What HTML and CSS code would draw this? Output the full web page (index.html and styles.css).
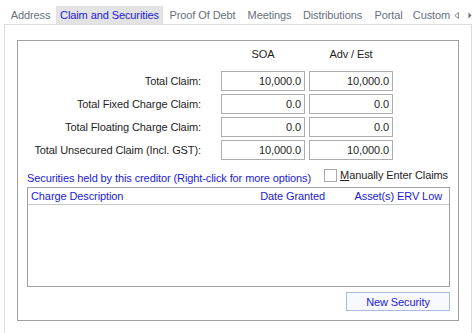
FILE: index.html
```html
<html>
<head>
    <title>Claim and Securities</title>
    <link rel="stylesheet" href="styles.css">
</head>
<body>

<div class="tabs">
    <div class="tab t1">Address</div>
    <div class="tab t2 active">Claim and Securities</div>
    <div class="tab t3">Proof Of Debt</div>
    <div class="tab t4">Meetings</div>
    <div class="tab t5">Distributions</div>
    <div class="tab t6">Portal</div>
    <div class="tab t7">Custom</div>
    <div class="arrows">
        <svg width="5" height="7" viewBox="0 0 5 7"><path d="M4.5 0.5 L0.8 3.5 L4.5 6.5 Z" fill="none" stroke="#8a8a8a" stroke-width="1"/></svg>
        <svg width="4" height="7" viewBox="0 0 4 7"><path d="M0.5 0.5 L3.5 3.5 L0.5 6.5 Z" fill="#6a6a6a"/></svg>
    </div>
</div>

<div class="page">
    <div class="groupBox">
        <div class="claimGrid">
            <div></div>
            <div class="colHead">SOA</div>
            <div class="colHead">Adv / Est</div>

            <div class="label">Total Claim:</div>
            <div class="numBox">10,000.0</div>
            <div class="numBox">10,000.0</div>

            <div class="label">Total Fixed Charge Claim:</div>
            <div class="numBox">0.0</div>
            <div class="numBox">0.0</div>

            <div class="label">Total Floating Charge Claim:</div>
            <div class="numBox">0.0</div>
            <div class="numBox">0.0</div>

            <div class="label">Total Unsecured Claim (Incl. GST):</div>
            <div class="numBox">10,000.0</div>
            <div class="numBox">10,000.0</div>
        </div>

        <div class="secSection">
            <div class="secTop">
                <span class="blueText">Securities held by this creditor (Right-click for more options)</span>
                <label class="check"><span class="checkBox"></span><span><u>M</u>anually Enter Claims</span></label>
            </div>
            <div class="listBox">
                <div class="listHead">
                    <span class="colDesc">Charge Description</span>
                    <span class="colDate">Date Granted</span>
                    <span class="colErv">Asset(s) ERV Low</span>
                </div>
            </div>
            <div class="btnRow">
                <button class="newBtn">New Security</button>
            </div>
        </div>
    </div>
</div>

</body>
</html>
```

FILE: styles.css
```css
body{
    margin: 0;
    background-color: #ffffff;
    font-family: "Liberation Sans", Arial, sans-serif;
    font-size: 11px;
    letter-spacing: -0.1px;
    color: #1e1e1e;
    overflow: hidden;
}

.tabs{
    display: flex;
    height: 24px;
    padding-left: 5px;
}

.tab{
    margin-top: 6px;
    height: 18px;
    line-height: 18px;
    text-align: center;
    color: #67707c;
    white-space: nowrap;
}

.tab.active{
    background-color: #e3e3e3;
    color: #1a1ad6;
}

.t1{ width: 51px; }
.t2{ width: 107px; }
.t3{ width: 79px; }
.t4{ width: 55px; }
.t5{ width: 71px; }
.t6{ width: 41px; }
.t7{ width: 45px; }

.arrows{
    margin-top: 12px;
    margin-left: 0;
    display: flex;
    gap: 9px;
    height: 7px;
}

.arrows svg{
    display: block;
}

.page{
    box-sizing: border-box;
    margin: 0 4px;
    height: 309px;
    border: 1px solid #dcdcdc;
    border-bottom: none;
    padding: 15px 12px 0 12px;
}

.groupBox{
    border: 1px solid #a0a0a0;
    padding-top: 5px;
    padding-bottom: 9px;
}

.claimGrid{
    display: grid;
    grid-template-columns: 199px 84px 84px;
    column-gap: 4px;
    row-gap: 3px;
}

.colHead{
    height: 16px;
    line-height: 16px;
    text-align: center;
    margin-bottom: 6px;
}

.label{
    text-align: right;
    padding-right: 16px;
    line-height: 20px;
}

.numBox{
    height: 18px;
    line-height: 18px;
    border: 1px solid #adadad;
    text-align: right;
    padding-right: 3px;
}

.secSection{
    padding: 0 8px 0 9px;
}

.secTop{
    display: flex;
    justify-content: space-between;
    align-items: center;
    height: 26px;
    padding-top: 1px;
}

.blueText{
    color: #1a1ad6;
    margin-top: 8px;
}

.check{
    display: flex;
    align-items: center;
    gap: 3px;
    padding-right: 2px;
    margin-top: 2px;
}

.checkBox{
    width: 11px;
    height: 11px;
    border: 1px solid #a8a8a8;
    background-color: #ffffff;
}

.listBox{
    height: 98px;
    border: 1px solid #a0a0a0;
}

.listHead{
    display: flex;
    height: 16px;
    line-height: 16px;
    border-bottom: 1px solid #c8c8c8;
    color: #1a1ad6;
    padding: 0 7px 0 3px;
}

.colDesc{
    flex: 1;
}

.colDate{
    width: 80px;
    text-align: right;
}

.colErv{
    width: 117px;
    text-align: right;
}

.btnRow{
    display: flex;
    justify-content: flex-end;
    margin-top: 5px;
}

.newBtn{
    width: 104px;
    height: 19px;
    border: 1px solid #a9bde3;
    background-color: #f8f9fc;
    color: #1a1ad6;
    font-family: "Liberation Sans", Arial, sans-serif;
    font-size: 11px;
    letter-spacing: -0.1px;
    padding: 0;
}
```
